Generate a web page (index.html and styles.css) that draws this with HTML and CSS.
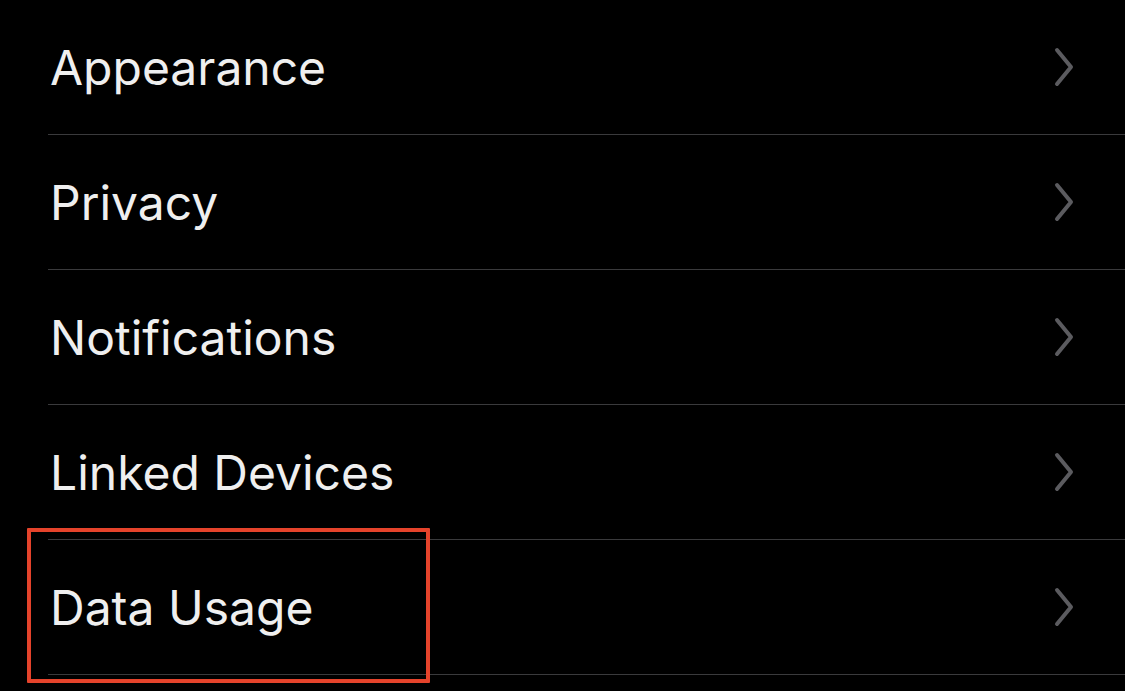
FILE: index.html
```html
<!DOCTYPE html>
<html>
<head>
  <title>Settings</title>
  <link rel="stylesheet" href="styles.css">
</head>
<body>
  <div class="settings-list">
    <div class="settings-row">
      <div class="row-label">Appearance</div>
      <svg class="chevron" viewBox="0 0 22 42"><path d="M4 4 L18 21 L4 38"/></svg>
    </div>
    <div class="settings-row">
      <div class="row-label">Privacy</div>
      <svg class="chevron" viewBox="0 0 22 42"><path d="M4 4 L18 21 L4 38"/></svg>
    </div>
    <div class="settings-row">
      <div class="row-label">Notifications</div>
      <svg class="chevron" viewBox="0 0 22 42"><path d="M4 4 L18 21 L4 38"/></svg>
    </div>
    <div class="settings-row">
      <div class="row-label">Linked Devices</div>
      <svg class="chevron" viewBox="0 0 22 42"><path d="M4 4 L18 21 L4 38"/></svg>
    </div>
    <div class="settings-row">
      <div class="row-label">Data Usage</div>
      <svg class="chevron" viewBox="0 0 22 42"><path d="M4 4 L18 21 L4 38"/></svg>
    </div>
    <div class="highlight-box"></div>
  </div>
</body>
</html>
```

FILE: styles.css
```css
body {
  margin: 0;
  background-color: #000;
  color: #efefef;
  font-family: Inter, "Noto Sans", sans-serif;
}

.settings-list {
  position: relative;
  padding-left: 48px;
  padding-bottom: 16px;
}

.settings-row {
  display: flex;
  justify-content: space-between;
  align-items: center;
  height: 134px;
  border-bottom: 1px solid #3a3a3c;
  padding-right: 50px;
}

.row-label {
  font-size: 48px;
  font-weight: 400;
  padding-left: 2px;
}

.chevron {
  width: 22px;
  height: 42px;
  fill: none;
  stroke: #5b5b5f;
  stroke-width: 4;
  stroke-linecap: round;
  stroke-linejoin: round;
}

.highlight-box {
  position: absolute;
  left: 27px;
  top: 528px;
  width: 395px;
  height: 147px;
  border: 4px solid #e5432b;
  border-radius: 1px;
}
```
